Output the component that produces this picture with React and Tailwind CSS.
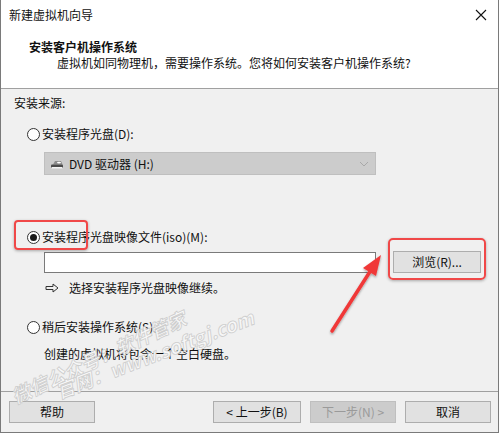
import React from "react";

const font = { fontFamily: '"Microsoft YaHei", "Noto Sans CJK SC", "Noto Sans", sans-serif' };

function Radio({ checked }) {
  return (
    <span className="relative inline-flex h-[13px] w-[13px] shrink-0 items-center justify-center rounded-full border border-[#333333] bg-white">
      {checked && <span className="h-[7px] w-[7px] rounded-full bg-[#1a1a1a]" />}
    </span>
  );
}

function Btn({ children, disabled, className = "" }) {
  return (
    <div
      className={
        "flex h-[22px] items-center justify-center border text-[12px] " +
        (disabled
          ? "border-[#bfbfbf] bg-[#cccccc] text-[#9a9a9a] "
          : "border-[#adadad] bg-[#e1e1e1] text-[#111111] ") +
        className
      }
    >
      {children}
    </div>
  );
}

export default function App() {
  return (
    <div
      style={font}
      className="relative flex h-[433px] w-[499px] flex-col overflow-hidden border-x border-b border-[#7a7a7a] bg-[#f0f0f0] text-[12px] leading-[16px] text-[#111111]"
    >
      {/* header */}
      <div className="h-[89px] shrink-0 border-b border-[#a0a0a0] bg-white">
        <div className="flex h-[30px] items-center justify-between pl-[8px] pr-[10px]">
          <span className="text-[#111111]">新建虚拟机向导</span>
          <svg width="12" height="12" viewBox="0 0 12 12" className="mr-[1px]">
            <path d="M1 1 L11 11 M11 1 L1 11" stroke="#111" strokeWidth="1.1" />
          </svg>
        </div>
        <div className="mt-[9px] pl-[28px] font-bold">安装客户机操作系统</div>
        <div className="pl-[56px]">虚拟机如同物理机，需要操作系统。您将如何安装客户机操作系统?</div>
      </div>

      {/* body */}
      <div className="flex flex-1 flex-col pl-[13px]">
        <div className="mt-[6px]">安装来源:</div>

        <div className="mt-[15px] flex items-center gap-[2px] pl-[13px]">
          <Radio />
          <span>安装程序光盘(D):</span>
        </div>
        <div className="ml-[30px] mt-[10px] flex h-[23px] w-[332px] items-center border border-[#bfbfbf] bg-[#cccccc] pl-[5px] pr-[6px]">
          <svg width="14" height="12" viewBox="0 0 14 12">
            <path d="M3 6.5 L5 3 H11 L12.5 6.5 Z" fill="#8c8c8c" />
            <rect x="1" y="6.5" width="12" height="3.5" rx="1" fill="#4a4a4a" />
            <rect x="1.5" y="9" width="11" height="1.5" rx="0.5" fill="#f4f4f4" />
            <ellipse cx="9" cy="4.6" rx="2" ry="0.9" fill="#ffffff" />
          </svg>
          <span className="ml-[5px] flex-1">DVD 驱动器 (H:)</span>
          <svg width="10" height="6" viewBox="0 0 10 6">
            <path d="M1 1 L5 5 L9 1" fill="none" stroke="#a8a8a8" strokeWidth="1" />
          </svg>
        </div>

        <div className="mt-[54px] flex items-center gap-[2px] pl-[13px]">
          <Radio checked />
          <span>安装程序光盘映像文件(iso)(M):</span>
        </div>
        <div className="mt-[6px] flex items-center">
          <div className="ml-[30px] h-[21px] w-[332px] border border-[#7a7a7a] bg-white" />
          <Btn className="ml-[17px] w-[88px]">浏览(R)...</Btn>
        </div>
        <div className="mt-[7px] flex items-center pl-[31px]">
          <svg width="14" height="10" viewBox="0 0 14 10">
            <path d="M1 3.5 H8 V1 L13 5 L8 9 V6.5 H1 Z" fill="none" stroke="#333" strokeWidth="1" />
          </svg>
          <span className="ml-[10px]">选择安装程序光盘映像继续。</span>
        </div>

        <div className="mt-[23px] flex items-center gap-[2px] pl-[13px]">
          <Radio />
          <span>稍后安装操作系统(S)。</span>
        </div>
        <div className="mt-[11px] pl-[30px]">创建的虚拟机将包含一个空白硬盘。</div>
      </div>

      {/* footer */}
      <div className="h-[41px] shrink-0 border-t border-[#a0a0a0]">
        <div className="mt-[9px] flex items-center pl-[8px]">
          <Btn className="w-[86px]">帮助</Btn>
          <Btn className="ml-[118px] w-[88px]">&lt; 上一步(B)</Btn>
          <Btn disabled className="ml-[9px] w-[86px]">下一步(N) &gt;</Btn>
          <Btn className="ml-[9px] w-[86px]">取消</Btn>
        </div>
      </div>

      {/* watermark */}
      <div className="pointer-events-none absolute left-[-5px] top-[345px] flex h-[22px] w-[204px] -rotate-[25deg] items-center justify-center whitespace-nowrap text-[19px] font-bold italic leading-none text-[#f7f7f7] [-webkit-text-stroke:0.8px_#cdcdcd]">
        微信公众号：软件管家
      </div>
      <div className="pointer-events-none absolute left-[46px] top-[342px] flex h-[22px] w-[214px] -rotate-[21deg] items-center justify-center whitespace-nowrap text-[19px] font-bold italic leading-none text-[#f7f7f7] [-webkit-text-stroke:0.8px_#cdcdcd]">
        官网：www.softgj.com
      </div>

      {/* annotation boxes */}
      <div className="pointer-events-none absolute left-[13px] top-[220px] h-[30px] w-[74px] rounded-[4px] border-2 border-[#f04848] shadow-[0_1px_3px_rgba(0,0,0,0.3)]" />
      <div className="pointer-events-none absolute left-[387px] top-[238px] h-[42px] w-[98px] rounded-[5px] border-2 border-[#f04848] shadow-[0_1px_3px_rgba(0,0,0,0.3)]" />

      {/* arrow */}
      <svg className="pointer-events-none absolute left-0 top-0" width="499" height="433" viewBox="0 0 499 433">
        <defs>
          <filter id="sh" x="-20%" y="-20%" width="140%" height="140%">
            <feDropShadow dx="0" dy="1.5" stdDeviation="1.2" floodColor="#000" floodOpacity="0.35" />
          </filter>
        </defs>
        <g filter="url(#sh)">
          <line x1="331" y1="331" x2="370" y2="270" stroke="#f03838" strokeWidth="3.5" strokeLinecap="round" />
          <path d="M380 255 L362 268 L375 276 Z" fill="#f03838" />
        </g>
      </svg>
    </div>
  );
}
